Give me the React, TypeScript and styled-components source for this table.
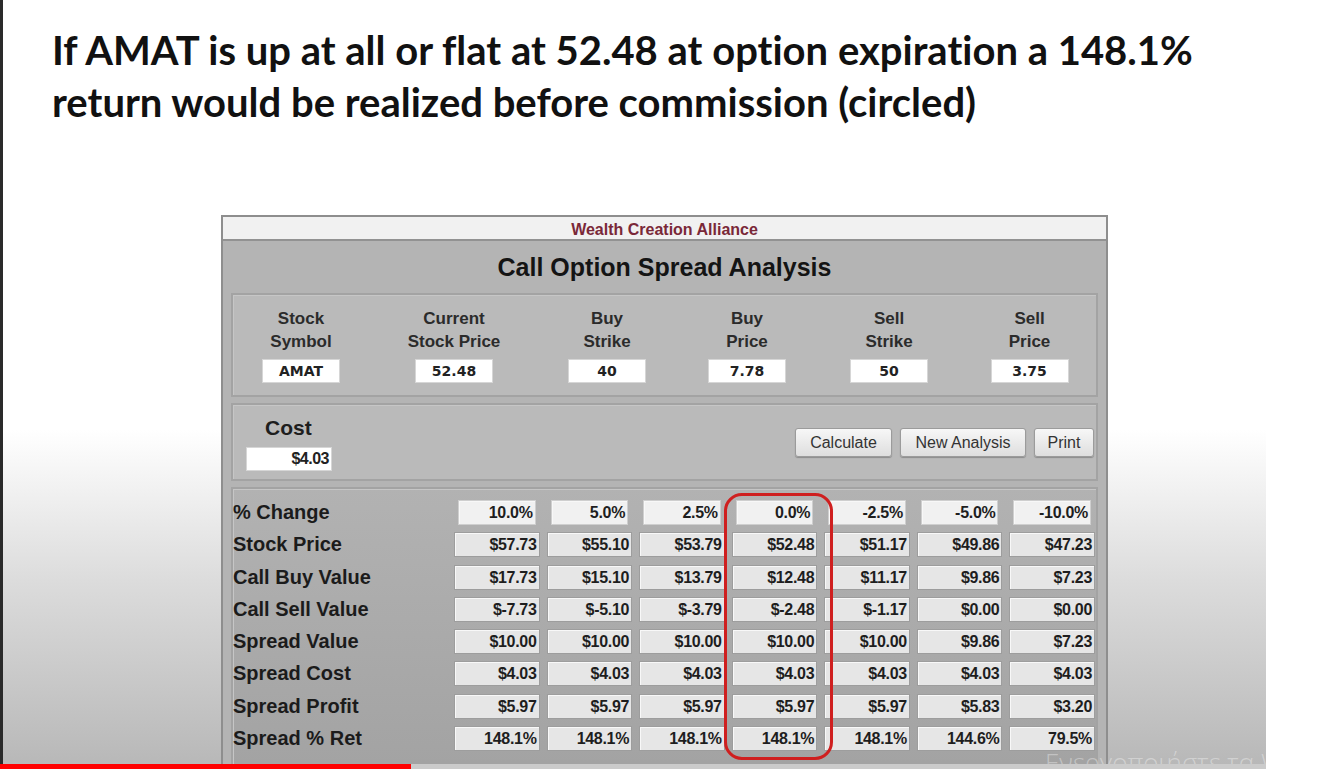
import React from "react"
import styled, { createGlobalStyle } from "styled-components"

const GlobalStyle = createGlobalStyle`
    html, body {
        margin: 0;
        padding: 0;
        background: #fff;
    }
`;

const Page = styled.div`
    width: 1330px;
    height: 780px;
    background: #fff;
    display: flex;
    flex-direction: column;
    overflow: hidden;
`;

const Slide = styled.div`
    position: relative;
    width: 1266px;
    height: 764px;
    box-sizing: border-box;
    border-left: 3px solid #2a2a2a;
    background: linear-gradient(to bottom, #ffffff 0px, #ffffff 430px, #dcdcdc 580px, #b8b8b8 764px);
    overflow: hidden;
    display: flex;
    flex-direction: column;
`;

const Heading = styled.h1`
    margin: 0;
    padding: 24px 0 0 49px;
    font-family: "Lato", "Open Sans", sans-serif;
    font-weight: 700;
    font-size: 40px;
    line-height: 52px;
    color: #111;
    font-variant-ligatures: none;
    white-space: nowrap;
`;

const Panel = styled.div`
    margin: 87px 0 0 218px;
    width: 887px;
    box-sizing: border-box;
    border: 2px solid #8e8e8e;
    border-bottom: none;
    background: #b4b4b4;
    display: flex;
    flex-direction: column;
    flex: 1;
    font-family: "Liberation Sans", Arial, sans-serif;
`;

const Brand = styled.div`
    height: 22px;
    background: #f1f1f1;
    border-bottom: 2px solid #929292;
    text-align: center;
    font-weight: 700;
    font-size: 16px;
    line-height: 26px;
    color: #7a2838;
`;

const Title = styled.div`
    height: 52px;
    text-align: center;
    font-weight: 700;
    font-size: 25px;
    line-height: 52px;
    color: #141414;
`;

const Sections = styled.div`
    flex: 1;
    padding: 0 8px;
    display: flex;
    flex-direction: column;
    gap: 6px;
`;

const Section = styled.div`
    box-sizing: border-box;
    border: 2px solid #a3a3a3;
    box-shadow: inset 1px 1px 0 #c6c6c6;
    background: #bababa;
`;

const InputSection = styled(Section)`
    height: 104px;
    padding: 12px 0 12px 0;
    display: grid;
    grid-template-columns: 136px 170px 136px 144px 140px 141px;
`;

const Field = styled.div`
    display: flex;
    flex-direction: column;
    align-items: center;
`;

const FieldLabel = styled.div`
    font-weight: 700;
    font-size: 17px;
    line-height: 23px;
    color: #2b2b2b;
    text-align: center;
`;

const InputBox = styled.div<{ $align?: string; $width?: number }>`
    box-sizing: border-box;
    width: ${p => p.$width ?? 78}px;
    height: 24px;
    margin-top: 6px;
    background: #fff;
    border: 1px solid #d6d6d6;
    font-family: ${p => p.$align === "right" ? `"Liberation Sans", Arial` : `"DejaVu Sans", Verdana`}, sans-serif;
    font-weight: 700;
    font-size: ${p => p.$align === "right" ? 16 : 14}px;
    line-height: 22px;
    text-align: ${p => p.$align ?? "center"};
    padding: 0 2px;
    color: #222;
    letter-spacing: ${p => p.$align === "right" ? "-0.5px" : "0"};
`;

const CostSection = styled(Section)`
    height: 78px;
    padding: 10px 2px 12px 13px;
    display: flex;
    justify-content: space-between;
    align-items: flex-start;
`;

const CostGroup = styled.div`
    display: flex;
    flex-direction: column;
    align-items: flex-start;
`;

const CostLabel = styled.div`
    margin-left: 19px;
    font-weight: 700;
    font-size: 21px;
    line-height: 26px;
    color: #1e1e1e;
`;

const Buttons = styled.div`
    display: flex;
    gap: 8px;
    margin-top: 13px;
`;

const Button = styled.button<{ $width: number }>`
    width: ${p => p.$width}px;
    height: 29px;
    box-sizing: border-box;
    border: 1px solid #9b9b9b;
    border-radius: 3px;
    background: linear-gradient(to bottom, #f7f7f7, #dedede);
    box-shadow: 0 1px 1px rgba(0, 0, 0, 0.25);
    font-family: "Liberation Sans", Arial, sans-serif;
    font-size: 16px;
    color: #333;
    padding: 0;
`;

const TableSection = styled(Section)`
    position: relative;
    flex: 1;
    border-bottom: none;
    background: linear-gradient(to bottom, #b2b2b2, #a3a3a3);
    padding: 11px 1px 0 0;
    display: grid;
    grid-template-columns: 214px repeat(7, 1fr);
    grid-auto-rows: 25px;
    column-gap: 7px;
    row-gap: 7.3px;
    align-content: start;
`;

const RowLabel = styled.div`
    font-weight: 700;
    font-size: 20px;
    line-height: 25px;
    color: #1b1b1b;
    white-space: nowrap;
`;

const Cell = styled.div<{ $head?: boolean }>`
    box-sizing: border-box;
    margin: ${p => p.$head ? "0 4px" : "0"};
    background: ${p => p.$head ? "#f1f1f1" : "#e6e6e6"};
    border: 1px solid ${p => p.$head ? "#cfcfcf" : "#9d9d9d"};
    box-shadow: inset 1px 1px 0 #f8f8f8;
    font-weight: 700;
    font-size: 16px;
    line-height: 23px;
    text-align: right;
    padding-right: 2px;
    color: #1e1e1e;
    letter-spacing: -0.3px;
    white-space: nowrap;
    overflow: hidden;
`;

const Circled = styled.div`
    position: absolute;
    left: 491px;
    top: 4px;
    width: 109px;
    height: 267px;
    box-sizing: border-box;
    border: 3.5px solid #cf1f1f;
    border-radius: 18px;
    pointer-events: none;
`;

const Watermark = styled.div`
    position: absolute;
    left: 1042px;
    top: 753px;
    font-family: "Open Sans", "Noto Sans", sans-serif;
    font-weight: 300;
    font-size: 26px;
    line-height: 18px;
    color: rgba(255, 255, 255, 0.36);
    white-space: nowrap;
`;

const Track = styled.div`
    width: 1266px;
    height: 5px;
    background: #cbcbcb;
`;

const Played = styled.div`
    width: 411px;
    height: 100%;
    background: #ff0000;
`;

const fields = [
    { label: ["Stock", "Symbol"], value: "AMAT" },
    { label: ["Current", "Stock Price"], value: "52.48" },
    { label: ["Buy", "Strike"], value: "40" },
    { label: ["Buy", "Price"], value: "7.78" },
    { label: ["Sell", "Strike"], value: "50" },
    { label: ["Sell", "Price"], value: "3.75" },
];

const rows: [string, string[]][] = [
    ["% Change", ["10.0%", "5.0%", "2.5%", "0.0%", "-2.5%", "-5.0%", "-10.0%"]],
    ["Stock Price", ["$57.73", "$55.10", "$53.79", "$52.48", "$51.17", "$49.86", "$47.23"]],
    ["Call Buy Value", ["$17.73", "$15.10", "$13.79", "$12.48", "$11.17", "$9.86", "$7.23"]],
    ["Call Sell Value", ["$-7.73", "$-5.10", "$-3.79", "$-2.48", "$-1.17", "$0.00", "$0.00"]],
    ["Spread Value", ["$10.00", "$10.00", "$10.00", "$10.00", "$10.00", "$9.86", "$7.23"]],
    ["Spread Cost", ["$4.03", "$4.03", "$4.03", "$4.03", "$4.03", "$4.03", "$4.03"]],
    ["Spread Profit", ["$5.97", "$5.97", "$5.97", "$5.97", "$5.97", "$5.83", "$3.20"]],
    ["Spread % Ret", ["148.1%", "148.1%", "148.1%", "148.1%", "148.1%", "144.6%", "79.5%"]],
];

export default function App() {
    return <Page>
        <GlobalStyle />
        <Slide>
            <Heading>
                If AMAT is up at all or flat at 52.48 at option expiration a 148.1%<br />
                return would be realized before commission (circled)
            </Heading>
            <Panel>
                <Brand>Wealth Creation Alliance</Brand>
                <Title>Call Option Spread Analysis</Title>
                <Sections>
                    <InputSection>
                        {fields.map(f => (
                            <Field key={f.label.join(" ")}>
                                <FieldLabel>{f.label[0]}<br />{f.label[1]}</FieldLabel>
                                <InputBox>{f.value}</InputBox>
                            </Field>
                        ))}
                    </InputSection>
                    <CostSection>
                        <CostGroup>
                            <CostLabel>Cost</CostLabel>
                            <InputBox $align="right" $width={86}>$4.03</InputBox>
                        </CostGroup>
                        <Buttons>
                            <Button $width={97}>Calculate</Button>
                            <Button $width={126}>New Analysis</Button>
                            <Button $width={60}>Print</Button>
                        </Buttons>
                    </CostSection>
                    <TableSection>
                        {rows.map(([label, values], i) => (
                            <React.Fragment key={label}>
                                <RowLabel>{label}</RowLabel>
                                {values.map((v, j) => <Cell key={j} $head={i === 0}>{v}</Cell>)}
                            </React.Fragment>
                        ))}
                        <Circled />
                    </TableSection>
                </Sections>
            </Panel>
            <Watermark>Ενεργοποιήστε τα Windows</Watermark>
        </Slide>
        <Track><Played /></Track>
    </Page>
};
